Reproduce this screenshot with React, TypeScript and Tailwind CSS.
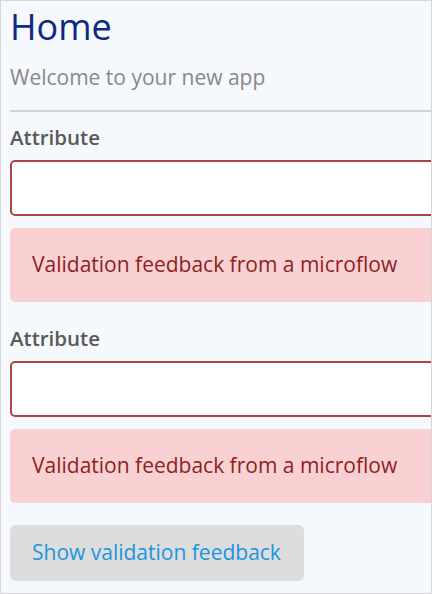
import React from "react";

function Field() {
  return (
    <div className="flex flex-col">
      <div className="mt-[3px] text-[20.5px] font-semibold text-[#595959] leading-[24px] h-[24px]">Attribute</div>
      <div className="mt-[11px] h-[56px] rounded-[5px] border-2 border-[#b04444] bg-white" />
      <div className="mt-[12px] h-[74px] rounded-[5px] bg-[#f9d1d3] flex items-center pl-[22px] text-[21px] text-[#8c1f22]">
        Validation feedback from a microflow
      </div>
    </div>
  );
}

export default function App() {
  return (
    <div
      className="w-[432px] h-[594px] border border-[#d6d6d6] bg-[#f5f8fd] overflow-hidden"
      style={{ fontFamily: '"Open Sans", sans-serif' }}
    >
      <div className="w-[520px] pl-[9px] flex flex-col">
        <h1 className="text-[36px] leading-[48px] text-[#0d2a7c] mt-[2px]">Home</h1>
        <div className="text-[21px] leading-[28px] text-[#888888] mt-[12px]">Welcome to your new app</div>
        <div className="mt-[19px] h-[2px] bg-[#d4d4d4]" />
        <div className="mt-[10px]">
          <Field />
        </div>
        <div className="mt-[21px]">
          <Field />
        </div>
        <div className="mt-[22px]">
          <button className="h-[56px] w-[294px] rounded-[6px] bg-[#dddddd] text-[21px] text-[#2094e0] text-left pl-[22px]">
            Show validation feedback
          </button>
        </div>
      </div>
    </div>
  );
}
